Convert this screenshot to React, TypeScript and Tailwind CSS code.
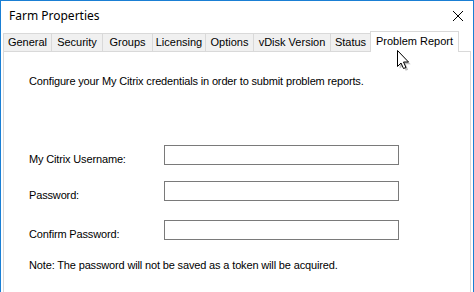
// Diálogo "Farm Properties" con la pestaña Problem Report activa.

const tabs = [
  { label: 'General', w: 'w-[49px]' },
  { label: 'Security', w: 'w-[52px]' },
  { label: 'Groups', w: 'w-[51px]' },
  { label: 'Licensing', w: 'w-[54px]' },
  { label: 'Options', w: 'w-[49px]' },
  { label: 'vDisk Version', w: 'w-[78px]' },
  { label: 'Status', w: 'w-[41px]' },
]

function Cursor() {
  return (
    <svg
      className="absolute left-[395px] top-[48px] z-20"
      width="16"
      height="23"
      viewBox="0 0 16 23"
    >
      <path
        d="M2.5 2.5 L2.5 18.5 L6 15 L8.5 20.5 L11 19.5 L8.5 14 L13.5 14 Z"
        fill="#000"
        opacity="0.25"
        transform="translate(1.2 1.2)"
      />
      <path
        d="M1.5 1.5 L1.5 17.5 L5 14 L7.5 19.5 L10 18.5 L7.5 13 L12.5 13 Z"
        fill="#fff"
        stroke="#000"
        strokeWidth="1"
        strokeLinejoin="miter"
      />
    </svg>
  )
}

// Fila del formulario: etiqueta un poco más baja que la caja, como en WinForms.
function Campo({ label, mt }: { label: string; mt: string }) {
  return (
    <div className={`flex items-start h-[20px] ${mt}`}>
      <span className="w-[135px] mt-[8px] leading-[13px]">{label}</span>
      <div className="w-[235px] h-[20px] border border-[#7a7a7a] bg-white" />
    </div>
  )
}

export default function App() {
  return (
    <div
      className="relative w-[474px] h-[292px] overflow-hidden bg-white border border-b-0 border-[#1a7fd4] text-[#000]"
      style={{ fontFamily: '"Liberation Sans", Arial, sans-serif' }}
    >
      {/* Barra de título */}
      <div className="h-[30px] flex items-center justify-between pl-[8px] pr-[9px]">
        <span
          className="text-[12px] text-[#000]"
          style={{ fontFamily: '"Noto Sans", "Open Sans", sans-serif' }}
        >
          Farm Properties
        </span>
        <svg width="12" height="12" viewBox="0 0 12 12">
          <path d="M1 1 L11 11 M11 1 L1 11" stroke="#000" strokeWidth="1" />
        </svg>
      </div>

      {/* Pestañas */}
      <div className="flex items-end h-[20px] pl-[2px] text-[11px] leading-[13px]">
        {tabs.map((t, i) => (
          <div
            key={t.label}
            className={`${t.w} h-[18px] ${i > 0 ? '-ml-px' : ''} flex items-center justify-center border border-b-0 border-[#d9d9d9] bg-[#f0f0f0] pb-[1px]`}
          >
            {t.label}
          </div>
        ))}
        <div className="relative z-10 -ml-px w-[89px] h-[21px] -mb-px flex items-start justify-center pt-[3px] border border-b-0 border-[#d9d9d9] bg-white">
          Problem Report
        </div>
      </div>

      {/* Panel de contenido */}
      <div className="ml-[2px] w-[468px] h-[260px] border border-[#d9d9d9] bg-white pl-[25px] text-[11px] leading-[13px] tracking-[-0.15px]">
        <p className="mt-[23px]">
          Configure your My Citrix credentials in order to submit problem reports.
        </p>
        <Campo label="My Citrix Username:" mt="mt-[57px]" />
        <Campo label="Password:" mt="mt-[16px]" />
        <Campo label="Confirm Password:" mt="mt-[19px]" />
        <p className="mt-[19px]">
          Note: The password will not be saved as a token will be acquired.
        </p>
      </div>

      <Cursor />
    </div>
  )
}
